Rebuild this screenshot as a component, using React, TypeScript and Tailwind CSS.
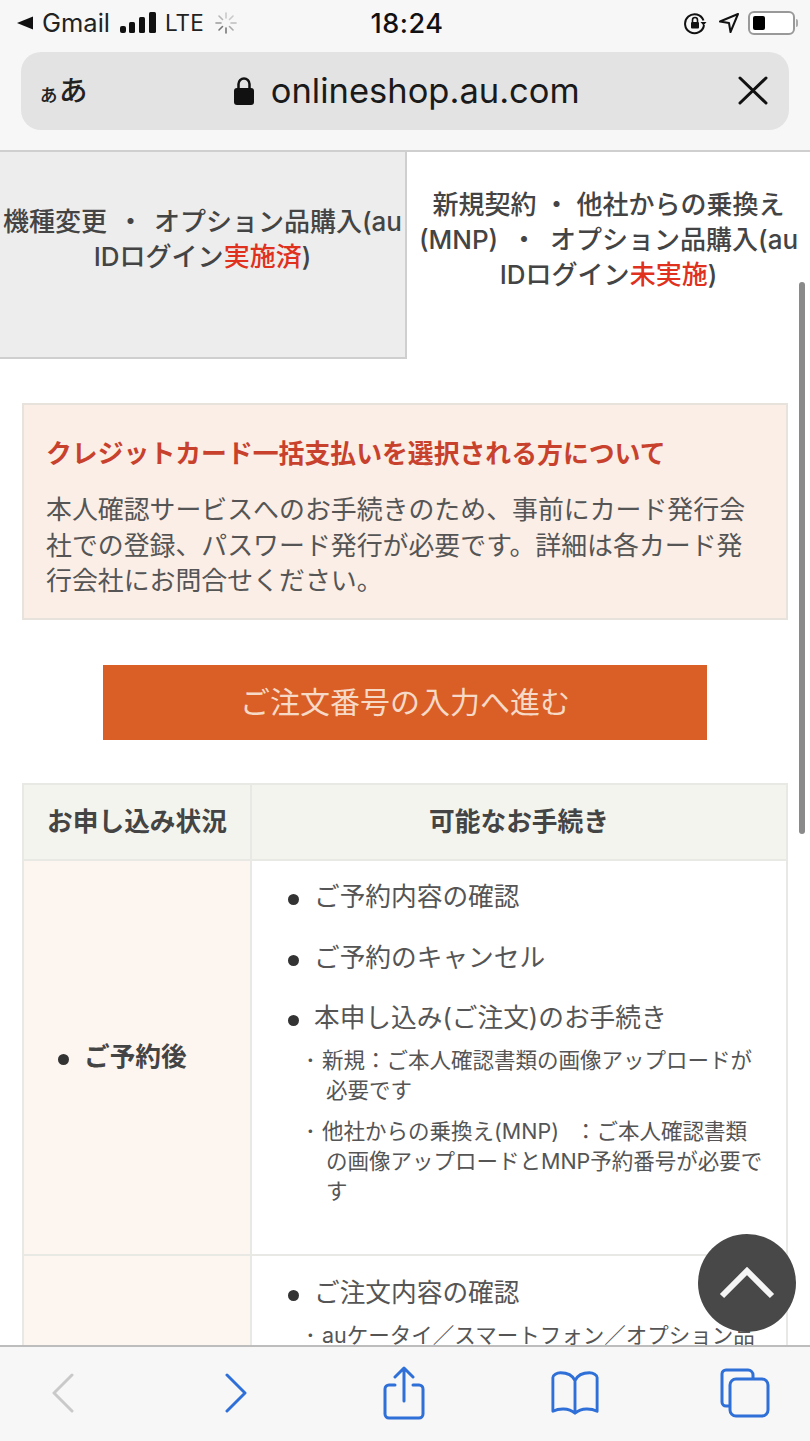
import React from 'react'

const jp = 'font-["Inter","Noto_Sans_CJK_JP",sans-serif]'

const Bullet = ({ children }: { children: React.ReactNode }) => (
  <div className="flex items-center text-[25.7px] leading-[36px] text-[#555]">
    <span className="mr-[15px] mt-[4px] h-[11px] w-[11px] shrink-0 rounded-full bg-[#333]" />
    <span className="whitespace-nowrap">{children}</span>
  </div>
)

const Note = ({ lines }: { lines: string[] }) => (
  <div className="text-[21.5px] leading-[30px] text-[#555]">
    {lines.map((line, i) => (
      <div key={line} className={i === 0 ? 'whitespace-nowrap [word-spacing:10px]' : 'whitespace-nowrap pl-[22px]'}>
        {i === 0 && <span className="inline-block w-[18px] pl-[1px] text-left">･</span>}
        {line}
      </div>
    ))}
  </div>
)

const StatusBar = () => (
  <div className="flex h-[46px] items-center justify-between pl-[16px] pr-[12px] text-black">
    <div className="flex w-[300px] items-center">
      <svg width="18" height="16" viewBox="0 0 18 16" className="mr-[8px]">
        <path d="M17 1.500v13L1 8z" fill="#111" />
      </svg>
      <span className="text-[25.5px] leading-none text-[#222]">Gmail</span>
      <svg width="38" height="24" viewBox="0 0 38 24" className="ml-[9px]">
        <rect x="1" y="15" width="6" height="7" rx="2" fill="#111" />
        <rect x="10" y="11" width="6" height="11" rx="1.500" fill="#111" />
        <rect x="20" y="6" width="6" height="16" rx="1.500" fill="#111" />
        <rect x="30" y="1" width="7" height="21" rx="1.500" fill="#111" />
      </svg>
      <span className="ml-[8px] text-[22.5px] leading-none text-[#222]">LTE</span>
      <svg width="22" height="22" viewBox="0 0 22 22" className="ml-[11px]" stroke="#777" strokeWidth="1.600" strokeLinecap="round">
        <path d="M11 1v5" opacity=".35" />
        <path d="M18 4l-3.500 3.500" opacity=".35" />
        <path d="M21 11h-5" opacity=".45" />
        <path d="M18 18l-3.500-3.500" opacity=".6" />
        <path d="M11 21v-5" />
        <path d="M4 18l3.500-3.500" />
        <path d="M1 11h5" opacity=".7" />
        <path d="M4 4l3.500 3.500" opacity=".5" />
      </svg>
    </div>
    <span className="text-[27px] font-medium leading-none tracking-[0.5px] text-[#111]">18:24</span>
    <div className="flex w-[300px] items-center justify-end">
      <svg width="24" height="24" viewBox="0 0 24 24" fill="none">
        <path d="M20.500 9.500A9.500 9.500 0 1 0 21 14" stroke="#111" strokeWidth="2" />
        <path d="M17.500 11h6l-3 3.500z" fill="#111" />
        <rect x="8" y="11" width="8" height="6.500" rx="1" fill="#111" />
        <path d="M9.500 11V9a2.500 2.500 0 0 1 5 0v2" stroke="#111" strokeWidth="1.600" />
      </svg>
      <svg width="22" height="22" viewBox="0 0 22 22" fill="none" className="ml-[11px]">
        <path d="M20 2L2 9.500l9 1.500 1.500 9z" stroke="#111" strokeWidth="2" strokeLinejoin="round" />
      </svg>
      <div className="ml-[8px] flex h-[24px] w-[47px] items-center rounded-[6px] border-2 border-[#999] bg-white p-[3px]">
        <div className="h-full w-[12px] rounded-[2px] bg-black" />
      </div>
      <div className="ml-[1px] h-[8px] w-[2px] rounded-r bg-[#aaa]" />
    </div>
  </div>
)

const AddressBar = () => (
  <div className="mx-[21px] mt-[6px] flex h-[78px] items-center justify-between rounded-[20px] bg-[#e3e3e3] pl-[17px] pr-[21px]">
    <span className="flex items-baseline font-medium text-[#222]">
      <span className="text-[21px]">ぁ</span>
      <span className="text-[28.5px]">あ</span>
    </span>
    <div className="ml-[-12px] flex items-center">
      <svg width="20" height="28" viewBox="0 0 20 28" fill="none" className="mr-[17px]">
        <rect x="0" y="11" width="20" height="17" rx="3" fill="#111" />
        <path d="M4.500 12V7a5.500 5.500 0 0 1 11 0v5" stroke="#111" strokeWidth="2.500" />
      </svg>
      <span className="text-[34.5px] leading-none text-[#1a1a1a]">onlineshop.au.com</span>
    </div>
    <svg width="30" height="30" viewBox="0 0 30 30" stroke="#111" strokeWidth="3" strokeLinecap="round">
      <path d="M2 2l26 25M28 2L2 27" />
    </svg>
  </div>
)

const Tabs = () => (
  <div className="flex h-[207px] text-[26px] font-medium leading-[35px] text-[#444]">
    <div className="h-full w-[407px] border-r-2 border-b-2 border-[#cfcfcf] bg-[#ededed] pt-[52px] text-center">
      <div className="whitespace-nowrap [word-spacing:3.500px]">機種変更 ・ オプション品購入(au</div>
      <div>
        IDログイン<span className="text-[#e0301e]">実施済</span>)
      </div>
    </div>
    <div className="flex-1 pt-[35px] text-center">
      <div className="whitespace-nowrap">新規契約 ・ 他社からの乗換え</div>
      <div className="whitespace-nowrap [word-spacing:6px]">(MNP) ・ オプション品購入(au</div>
      <div>
        IDログイン<span className="text-[#e0301e]">未実施</span>)
      </div>
    </div>
  </div>
)

const Notice = () => (
  <div className="mx-[22px] mt-[44px] h-[217px] border-2 border-[#e8e2dc] bg-[#faeee7] pl-[22px] pt-[31px]">
    <div className="whitespace-nowrap text-[25.85px] font-bold leading-[36px] text-[#c8412c]">
      クレジットカード一括支払いを選択される方について
    </div>
    <div className="mt-[20px] text-[25.9px] leading-[35.500px] text-[#555]">
      <div className="whitespace-nowrap">本人確認サービスへのお手続きのため、事前にカード発行会</div>
      <div className="whitespace-nowrap">社での登録、パスワード発行が必要です。詳細は各カード発</div>
      <div className="whitespace-nowrap">行会社にお問合せください。</div>
    </div>
  </div>
)

const StatusTable = () => (
  <div className="mx-[22px] mt-[43px] border-x-2 border-t-2 border-[#e8e8e4] text-[#444]">
    <div className="flex h-[76px] border-b-2 border-[#e8e8e4] bg-[#f4f4ee] text-[25.7px] font-bold">
      <div className="flex w-[228px] items-center justify-center border-r-2 border-[#e8e8e4]">お申し込み状況</div>
      <div className="flex flex-1 items-center justify-center">可能なお手続き</div>
    </div>
    <div className="flex h-[395px] border-b-2 border-[#e8e8e4]">
      <div className="flex w-[228px] items-center border-r-2 border-[#e8e8e4] bg-[#fdf5f0] pl-[34px] text-[25.7px] font-bold">
        <span className="mr-[15px] mt-[4px] h-[11px] w-[11px] rounded-full bg-[#333]" />
        ご予約後
      </div>
      <div className="flex-1 bg-white pl-[36px] pt-[18px]">
        <Bullet>ご予約内容の確認</Bullet>
        <div className="mt-[25px]">
          <Bullet>ご予約のキャンセル</Bullet>
        </div>
        <div className="mt-[24px]">
          <Bullet>本申し込み(ご注文)のお手続き</Bullet>
        </div>
        <div className="ml-[16px] mt-[9px]">
          <Note lines={['新規：ご本人確認書類の画像アップロードが', '必要です']} />
        </div>
        <div className="ml-[16px] mt-[11px]">
          <Note lines={['他社からの乗換え(MNP) ：ご本人確認書類', 'の画像アップロードとMNP予約番号が必要で', 'す']} />
        </div>
      </div>
    </div>
    <div className="flex h-[120px]">
      <div className="w-[228px] border-r-2 border-[#e8e8e4] bg-[#fdf5f0]" />
      <div className="flex-1 bg-white pl-[36px] pt-[19px]">
        <Bullet>ご注文内容の確認</Bullet>
        <div className="ml-[16px] mt-[9px]">
          <Note lines={['auケータイ／スマートフォン／オプション品']} />
        </div>
      </div>
    </div>
  </div>
)

const Toolbar = () => (
  <div className="flex h-[96px] shrink-0 items-center justify-between border-t-2 border-[#bdbdbd] bg-[#f7f7f7] pb-[2px] pl-[38px] pr-[40px]">
    <div className="flex w-[50px] justify-center">
      <svg width="24" height="40" viewBox="0 0 24 40" fill="none" stroke="#c9c9c9" strokeWidth="3" strokeLinecap="round" strokeLinejoin="round">
        <path d="M21 2L3 20l18 18" />
      </svg>
    </div>
    <div className="flex w-[50px] justify-center pl-[4px]">
      <svg width="24" height="40" viewBox="0 0 24 40" fill="none" stroke="#2f6fd8" strokeWidth="3" strokeLinecap="round" strokeLinejoin="round">
        <path d="M3 2l18 18L3 38" />
      </svg>
    </div>
    <div className="flex w-[50px] justify-center">
      <svg width="42" height="54" viewBox="0 0 42 54" fill="none" stroke="#2f6fd8" strokeWidth="3" strokeLinecap="round" strokeLinejoin="round">
        <path d="M12 19H6a4 4 0 0 0-4 4v25a4 4 0 0 0 4 4h30a4 4 0 0 0 4-4V23a4 4 0 0 0-4-4h-6" />
        <path d="M21 35V3M12 11l9-9 9 9" />
      </svg>
    </div>
    <div className="flex w-[50px] justify-center">
      <svg width="52" height="46" viewBox="0 0 52 46" fill="none" stroke="#2f6fd8" strokeWidth="3" strokeLinecap="round" strokeLinejoin="round">
        <path d="M26 10C23 4 17 2 11 2 7 2 3 4 3 7v35c6-3 16-4 23 2 7-6 17-5 23-2V7c0-3-4-5-8-5-6 0-12 2-15 8zM26 10v34" />
      </svg>
    </div>
    <div className="flex w-[50px] justify-center">
      <svg width="50" height="50" viewBox="0 0 50 50" fill="none" stroke="#2f6fd8" strokeWidth="3" strokeLinecap="round" strokeLinejoin="round">
        <path d="M9 38H6a4 4 0 0 1-4-4V6a4 4 0 0 1 4-4h22a5 5 0 0 1 5 5v3" />
        <rect x="10" y="11" width="38" height="37" rx="6" />
      </svg>
    </div>
  </div>
)

export default function App() {
  return (
    <div className={`relative flex h-[1441px] w-[810px] flex-col overflow-hidden bg-white ${jp}`}>
      <header className="h-[152px] shrink-0 border-b-2 border-[#cfcfcf] bg-[#f7f7f7]">
        <StatusBar />
        <AddressBar />
      </header>
      <main className="min-h-0 flex-1 overflow-hidden">
        <Tabs />
        <Notice />
        <div className="mx-[103px] mt-[45px] flex h-[75px] items-center justify-center bg-[#d95f26] text-[30px] text-[#f6d9c6]">
          ご注文番号の入力へ進む
        </div>
        <StatusTable />
      </main>
      <Toolbar />
      {/* page scrollbar and back-to-top button float over the content */}
      <div className="absolute right-[5px] top-[282px] h-[552px] w-[6px] rounded-full bg-[#8a8a8a]" />
      <div className="absolute left-[698px] top-[1234px] flex h-[98px] w-[98px] items-center justify-center rounded-full bg-[#484848]">
        <svg width="56" height="32" viewBox="0 0 56 32" fill="none" stroke="#f5f5f5" strokeWidth="6" strokeLinejoin="miter">
          <path d="M3 29L28 4l25 25" />
        </svg>
      </div>
    </div>
  )
}
